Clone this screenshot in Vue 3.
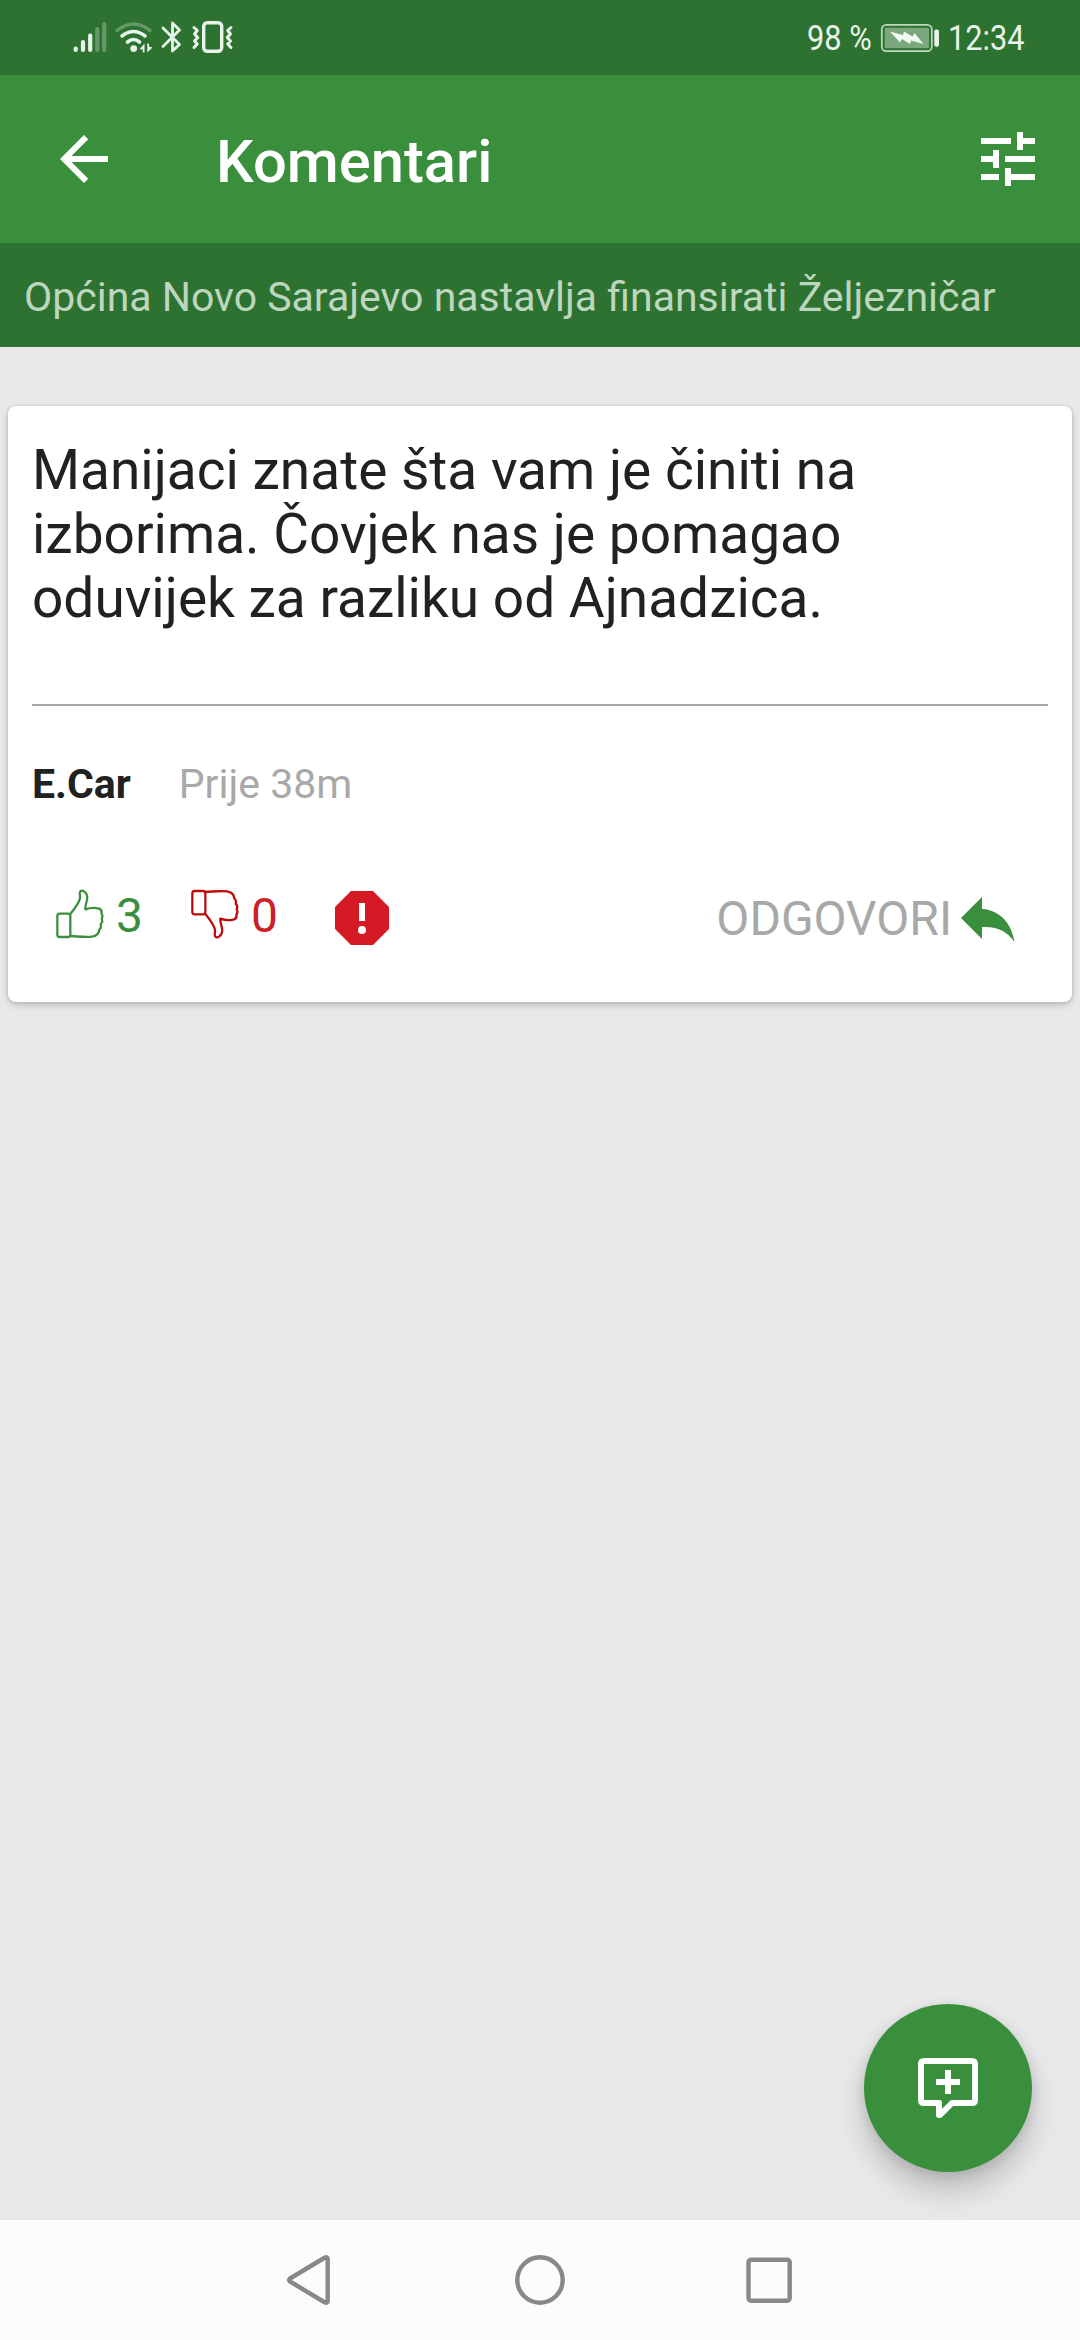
<script setup>
const comment = {
  lines: [
    'Manijaci znate šta vam je činiti na',
    'izborima. Čovjek nas je pomagao',
    'oduvijek za razliku od Ajnadzica.',
  ],
  author: 'E.Car',
  time: 'Prije 38m',
  likes: 3,
  dislikes: 0,
}
const cuff = 'M179 581H204Q211 581 211 588V644Q211 651 204 651H179Q172 651 172 644V588Q172 581 179 581Z'
const hand = 'M211 582C226 564 237 549 240 535C241 527 237 517 241 514C247 508 258 516 261 527C265 540 254 555 256 568C272 562 288 563 297 566C304 569 306 574 304 580C309 586 308 591 305 596C308 603 307 609 302 612C304 620 302 626 298 629C297 641 291 648 276 650C255 653 234 649 211 648'
</script>

<template>
  <div class="screen">
    <div class="status">
      <svg width="180" height="75" viewBox="60 0 180 75" fill="none" stroke="#e8f3e9" stroke-linecap="round">
        <g stroke-width="4.2">
          <path d="M75.7 48.500V50M83 42V50M90.200 35.500V50" />
          <path d="M97.300 29V50M104.200 24V50" opacity=".3" />
        </g>
        <path d="M117 30.500Q133.500 17.500 150 30.500" stroke-width="3.600" opacity=".3" />
        <path d="M122 36Q133.500 27 145 36M127.500 42Q133.500 37 139.500 42" stroke-width="3.600" />
        <circle cx="133.700" cy="48.600" r="3.400" fill="#e8f3e9" stroke="none" />
        <path d="M144.500 43.500V52.500H142.800V49.500L139.500 49.300ZM147.300 43.500H149V46.500L152.500 47.500L147.300 52.500Z" fill="#e8f3e9" stroke="none" />
        <path d="M163 28L179.500 44.500L172.500 51V23L179.500 30L163 46.500" stroke-width="2.800" stroke-linejoin="round" />
        <rect x="203.700" y="22.700" width="18" height="28.500" rx="3.500" stroke-width="3.400" />
        <path d="M194 27.500L197.300 30.500L194.500 34L197.800 37.500L194.500 41L197.300 44L194 47.500M231 27.500L227.700 30.500L230.500 34L227.200 37.500L230.500 41L227.700 44L231 47.500" stroke-width="3" stroke-linejoin="round" />
      </svg>
      <div class="status-right">
        <span class="battery-level"><span class="narrow">98 %</span></span>
        <svg width="60" height="28" viewBox="880 23.500 60 28">
          <rect x="881.800" y="24.400" width="50" height="26.200" rx="4.500" fill="none" stroke="#bfd8c0" stroke-width="1.700" />
          <rect x="884.700" y="27.300" width="44.300" height="20.400" rx="1.500" fill="#7aa77c" />
          <path d="M890 31L903 34.500L904 31L912.500 36L914.500 32.500L923.500 43.500L911 40L910 43.500L902 38.500L900 42Z" fill="#f2f8f2" />
          <rect x="934.300" y="29" width="4.700" height="17.300" rx="2" fill="#e8f3e9" />
        </svg>
        <span class="clock"><span class="narrow">12:34</span></span>
      </div>
    </div>

    <header class="appbar">
      <svg width="72" height="72" viewBox="0 0 24 24" fill="#fff">
        <path d="M20 11H7.830l5.590-5.590L12 4l-8 8 8 8 1.410-1.410L7.830 13H20v-2z" />
      </svg>
      <h1>Komentari</h1>
      <svg width="72" height="72" viewBox="0 0 24 24" fill="#fff">
        <path d="M3 17v2h6v-2H3zM3 5v2h10V5H3zm10 16v-2h8v-2h-8v-2h-2v6h2zM7 9v2H3v2h4v2h2V9H7zm14 4v-2H11v2h10zm-6-4h2V7h4V5h-4V3h-2v6z" />
      </svg>
    </header>

    <div class="subject">Općina Novo Sarajevo nastavlja finansirati Željezničar</div>

    <main>
      <article class="card">
        <p class="body">
          <span v-for="line in comment.lines" :key="line">{{ line }}</span>
        </p>
        <div class="meta">
          <b>{{ comment.author }}</b>
          <span>{{ comment.time }}</span>
        </div>
        <div class="actions">
          <div class="vote up">
            <svg width="50" height="50" viewBox="165 507 150 150" fill="none" stroke="currentColor" stroke-width="6.800" stroke-linejoin="round">
              <path :d="cuff" /><path :d="hand" />
            </svg>
            <span>{{ comment.likes }}</span>
          </div>
          <div class="vote down">
            <svg class="flip" width="50" height="50" viewBox="165 507 150 150" fill="none" stroke="#bd0a0c" stroke-width="6.800" stroke-linejoin="round">
              <path :d="cuff" /><path :d="hand" />
            </svg>
            <span>{{ comment.dislikes }}</span>
          </div>
          <svg class="report" width="54" height="54" viewBox="0 0 54 54">
            <path d="M16 0H38L54 16V38L38 54H16L0 38V16Z" fill="#d51a25" />
            <path d="M24 12H30V30H24Z" fill="#fff" />
            <circle cx="27" cy="39" r="4" fill="#fff" />
          </svg>
          <div class="reply">
            <span>ODGOVORI</span>
            <svg width="54" height="46" viewBox="0 0 54 46">
              <path d="M0 21L21 0V12C40 13 51 28 53.500 45C46 34 36 29 21 30V42Z" fill="#3a8f3d" />
            </svg>
          </div>
        </div>
      </article>
    </main>

    <button class="fab">
      <svg width="72" height="72" viewBox="0 0 72 72" fill="none" stroke="#fff" stroke-width="6">
        <path d="M12 9H60Q63 9 63 12V48Q63 51 60 51H40L28 63H27V51H12Q9 51 9 48V12Q9 9 12 9Z" stroke-linejoin="round" />
        <path d="M24 30H48M36 18V42" />
      </svg>
    </button>

    <nav>
      <svg width="540" height="120" viewBox="270 0 540 120" fill="none" stroke="#888" stroke-width="4.400" stroke-linejoin="round">
        <path d="M290 58.500L325 37.500Q327.700 36.500 327.700 39.500V80.500Q327.700 83.500 325 82.500L290 61.500Q288.500 60 290 58.500Z" />
        <circle cx="540" cy="60" r="22.700" />
        <rect x="748.500" y="39.700" width="41.200" height="41" rx="2.500" />
      </svg>
    </nav>
  </div>
</template>

<style>
body {
  margin: 0;
}
</style>

<style scoped>
.screen {
  position: relative;
  display: flex;
  flex-direction: column;
  width: 1080px;
  height: 2340px;
  background: #e9e9e9;
  font-family: Roboto, "Noto Sans", sans-serif;
  color: #212121;
}
svg {
  display: block;
  flex: none;
}
.status {
  display: flex;
  justify-content: space-between;
  height: 75px;
  padding-left: 60px;
  background: #2d7230;
}
.status-right {
  display: flex;
  align-items: center;
  width: 273px;
  color: #e8f3e9;
  font-size: 35.5px;
  line-height: 76px;
  white-space: nowrap;
}
.battery-level {
  width: 73px;
}
.clock {
  margin-left: 8px;
}
.narrow {
  display: block;
  width: max-content;
  transform: scaleX(0.866);
  transform-origin: left center;
}
.appbar {
  display: flex;
  align-items: center;
  height: 168px;
  padding: 0 36px 0 48px;
  box-sizing: border-box;
  background: #3a8f3d;
}
h1 {
  flex: 1;
  margin: 0 0 0 96px;
  padding-top: 5px;
  font-size: 59.7px;
  font-weight: 500;
  line-height: 70px;
  color: #fff;
}
.subject {
  height: 104px;
  padding: 2px 24px 0;
  box-sizing: border-box;
  background: #2d7230;
  color: #bdd6bf;
  font-size: 41px;
  line-height: 104px;
  white-space: nowrap;
}
main {
  flex: 1;
  padding: 59px 8px 0;
}
.card {
  height: 596px;
  padding: 32px 24px 0;
  box-sizing: border-box;
  border-radius: 8px;
  background: #fff;
  box-shadow: 0 3px 7px rgba(0, 0, 0, 0.2), 0 0 3px rgba(0, 0, 0, 0.14);
}
.body {
  display: flex;
  flex-direction: column;
  height: 266px;
  margin: 0;
  border-bottom: 2px solid #a8a8a8;
  font-size: 55px;
  line-height: 64px;
  white-space: nowrap;
}
.meta {
  display: flex;
  gap: 48px;
  margin-top: 53px;
  font-size: 41px;
  line-height: 50px;
}
.meta span,
.reply {
  color: #a8a8a8;
}
.actions {
  display: flex;
  height: 60px;
  margin-top: 79px;
  padding: 0 33px 0 23px;
  font-size: 48px;
  line-height: 56px;
}
.vote {
  display: flex;
  gap: 11px;
  width: 135px;
}
.vote svg {
  margin-top: 1px;
}
.up {
  color: #3a8f3d;
}
.down {
  color: #cc1f2a;
}
.flip {
  transform: scaleY(-1);
}
.report {
  margin: 3px 0 0 10px;
}
.reply {
  display: flex;
  gap: 9px;
  margin-left: auto;
}
.reply span {
  margin-top: 3px;
}
.reply svg {
  margin-top: 9px;
}
.fab {
  position: absolute;
  right: 48px;
  bottom: 168px;
  display: flex;
  align-items: center;
  justify-content: center;
  width: 168px;
  height: 168px;
  padding: 0;
  border: 0;
  border-radius: 50%;
  background: #3a8f3d;
  box-shadow: 0 18px 30px rgba(0, 0, 0, 0.2), 0 3px 12px rgba(0, 0, 0, 0.1);
}
nav {
  display: flex;
  justify-content: center;
  height: 120px;
  background: #fcfcfc;
}
</style>
